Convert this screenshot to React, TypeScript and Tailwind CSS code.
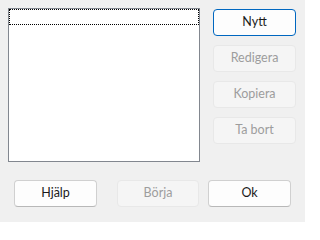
import React from "react";

const font = { fontFamily: 'Lato, "Noto Sans", sans-serif' };

function Btn({ label, primary, disabled, w }: { label: string; primary?: boolean; disabled?: boolean; w: string }) {
  const base = "h-[27px] rounded-[4px] border text-[12.5px] flex items-center justify-center leading-none";
  let cls = "";
  if (primary) cls = "border-[#0067c0] bg-[#fdfdfd] text-[#1a1a1a]";
  else if (disabled) cls = "border-[#e8e8e8] bg-[#f5f5f5] text-[#9d9d9d]";
  else cls = "border-[#d0d0d0] border-b-[#b8b8b8] bg-[#fdfdfd] text-[#1a1a1a]";
  return (
    <button type="button" className={`${base} ${cls} ${w}`} style={font} disabled={disabled}>
      {label}
    </button>
  );
}

export default function App() {
  return (
    <div className="w-[305px] h-[222px] bg-[#f0f0f0] overflow-hidden" style={font}>
      <div className="flex pt-2 pl-2">
        <div className="w-[192px] h-[154px] border border-[#82878f] bg-white">
          <div className="h-[16px] border border-dotted border-black"></div>
        </div>
        <div className="flex flex-col gap-[9px] ml-[13px] mt-px">
          <Btn label="Nytt" primary w="w-[83px]" />
          <Btn label="Redigera" disabled w="w-[83px]" />
          <Btn label="Kopiera" disabled w="w-[83px]" />
          <Btn label="Ta bort" disabled w="w-[83px]" />
        </div>
      </div>
      <div className="flex mt-[18px] pl-[14px]">
        <Btn label="Hjälp" w="w-[83px]" />
        <div className="ml-[20px]">
          <Btn label="Börja" disabled w="w-[82px]" />
        </div>
        <div className="ml-[9px]">
          <Btn label="Ok" w="w-[83px]" />
        </div>
      </div>
    </div>
  );
}
